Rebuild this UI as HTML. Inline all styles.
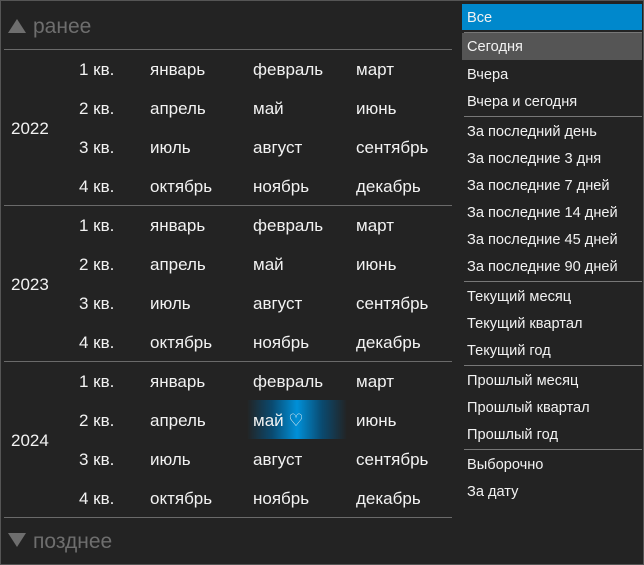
<!DOCTYPE html><html><head><meta charset="utf-8"><style>
*{margin:0;padding:0;box-sizing:border-box}
body{width:644px;height:565px;background:#232323;font-family:"Liberation Sans","DejaVu Sans",sans-serif;color:#f2f2f2;position:relative;overflow:hidden}
.frame{position:absolute;left:0;top:0;width:644px;height:565px;border:1px solid #555}
.t{position:absolute;white-space:nowrap;line-height:20px;font-size:17px;transform:translateY(-9px)}
.r{position:absolute;left:467px;white-space:nowrap;line-height:18px;font-size:14.6px;transform:translateY(-8px)}
.hl{position:absolute;left:4px;width:448px;height:1px;background:#6a6a6a}
.sep{position:absolute;left:464px;width:178px;height:1px;background:#777}
.hd{position:absolute;left:33px;font-size:21px;color:#6e6e6e;line-height:24px;transform:translateY(-11px)}
.up{position:absolute;left:8px;width:0;height:0;border-left:9px solid transparent;border-right:9px solid transparent;border-bottom:14px solid #6e6e6e}
.dn{position:absolute;left:8px;width:0;height:0;border-left:9px solid transparent;border-right:9px solid transparent;border-top:14px solid #6e6e6e}
</style></head><body>
<div class="frame"></div>
<div class="up" style="top:19px"></div><div class="hd" style="top:26px">ранее</div>
<div class="hl" style="top:49px"></div>
<div class="hl" style="top:205px"></div>
<div class="hl" style="top:361px"></div>
<div class="hl" style="top:517px"></div>
<div class="dn" style="top:533px"></div><div class="hd" style="top:541px">позднее</div>
<div style="position:absolute;left:247px;top:400px;width:100px;height:39px;background:linear-gradient(90deg,#232323 0%,#0a4a70 25%,#0090d8 50%,#0a4a70 75%,#232323 100%)"></div>
<div class="t" style="left:11px;top:128px">2022</div>
<div class="t" style="left:11px;top:284px">2023</div>
<div class="t" style="left:11px;top:440px">2024</div>
<div class="t" style="left:79px;top:69px">1 кв.</div><div class="t" style="left:150px;top:69px">январь</div><div class="t" style="left:253px;top:69px">февраль</div><div class="t" style="left:356px;top:69px">март</div>
<div class="t" style="left:79px;top:108px">2 кв.</div><div class="t" style="left:150px;top:108px">апрель</div><div class="t" style="left:253px;top:108px">май</div><div class="t" style="left:356px;top:108px">июнь</div>
<div class="t" style="left:79px;top:147px">3 кв.</div><div class="t" style="left:150px;top:147px">июль</div><div class="t" style="left:253px;top:147px">август</div><div class="t" style="left:356px;top:147px">сентябрь</div>
<div class="t" style="left:79px;top:186px">4 кв.</div><div class="t" style="left:150px;top:186px">октябрь</div><div class="t" style="left:253px;top:186px">ноябрь</div><div class="t" style="left:356px;top:186px">декабрь</div>
<div class="t" style="left:79px;top:225px">1 кв.</div><div class="t" style="left:150px;top:225px">январь</div><div class="t" style="left:253px;top:225px">февраль</div><div class="t" style="left:356px;top:225px">март</div>
<div class="t" style="left:79px;top:264px">2 кв.</div><div class="t" style="left:150px;top:264px">апрель</div><div class="t" style="left:253px;top:264px">май</div><div class="t" style="left:356px;top:264px">июнь</div>
<div class="t" style="left:79px;top:303px">3 кв.</div><div class="t" style="left:150px;top:303px">июль</div><div class="t" style="left:253px;top:303px">август</div><div class="t" style="left:356px;top:303px">сентябрь</div>
<div class="t" style="left:79px;top:342px">4 кв.</div><div class="t" style="left:150px;top:342px">октябрь</div><div class="t" style="left:253px;top:342px">ноябрь</div><div class="t" style="left:356px;top:342px">декабрь</div>
<div class="t" style="left:79px;top:381px">1 кв.</div><div class="t" style="left:150px;top:381px">январь</div><div class="t" style="left:253px;top:381px">февраль</div><div class="t" style="left:356px;top:381px">март</div>
<div class="t" style="left:79px;top:420px">2 кв.</div><div class="t" style="left:150px;top:420px">апрель</div><div class="t" style="left:253px;top:420px">май ♡</div><div class="t" style="left:356px;top:420px">июнь</div>
<div class="t" style="left:79px;top:459px">3 кв.</div><div class="t" style="left:150px;top:459px">июль</div><div class="t" style="left:253px;top:459px">август</div><div class="t" style="left:356px;top:459px">сентябрь</div>
<div class="t" style="left:79px;top:498px">4 кв.</div><div class="t" style="left:150px;top:498px">октябрь</div><div class="t" style="left:253px;top:498px">ноябрь</div><div class="t" style="left:356px;top:498px">декабрь</div>

<div style="position:absolute;left:462px;top:4px;width:180px;height:26px;background:#0088cc"></div>
<div class="sep" style="top:32px"></div>
<div style="position:absolute;left:462px;top:33px;width:180px;height:27px;background:#555"></div>
<div class="sep" style="top:116px"></div>
<div class="sep" style="top:281px"></div>
<div class="sep" style="top:365px"></div>
<div class="sep" style="top:449px"></div>
<div class="r" style="top:17px">Все</div>
<div class="r" style="top:46px">Сегодня</div>
<div class="r" style="top:74px">Вчера</div>
<div class="r" style="top:101px">Вчера и сегодня</div>
<div class="r" style="top:131px">За последний день</div>
<div class="r" style="top:158px">За последние 3 дня</div>
<div class="r" style="top:185px">За последние 7 дней</div>
<div class="r" style="top:212px">За последние 14 дней</div>
<div class="r" style="top:239px">За последние 45 дней</div>
<div class="r" style="top:266px">За последние 90 дней</div>
<div class="r" style="top:296px">Текущий месяц</div>
<div class="r" style="top:323px">Текущий квартал</div>
<div class="r" style="top:350px">Текущий год</div>
<div class="r" style="top:380px">Прошлый месяц</div>
<div class="r" style="top:407px">Прошлый квартал</div>
<div class="r" style="top:434px">Прошлый год</div>
<div class="r" style="top:464px">Выборочно</div>
<div class="r" style="top:491px">За дату</div>
</body></html>
